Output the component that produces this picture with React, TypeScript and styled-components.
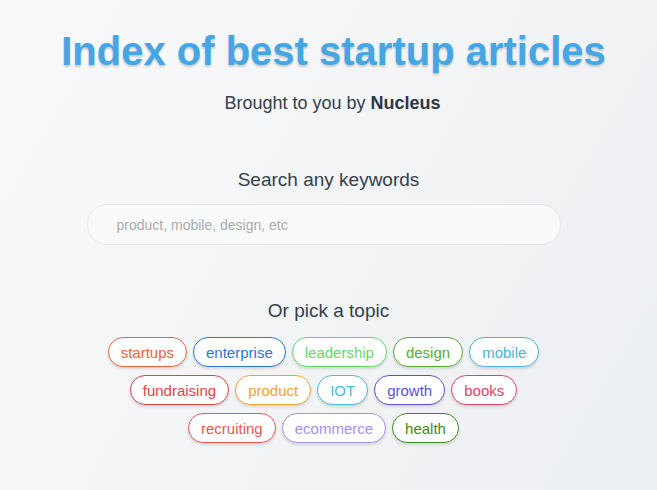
import React from "react";
import styled, { createGlobalStyle } from "styled-components";

const Global = createGlobalStyle`
  html, body { margin: 0; padding: 0; }
  body {
    font-family: "Liberation Sans", Arial, sans-serif;
    background: linear-gradient(120deg, #f9fafb 0%, #f1f3f5 60%, #eceff2 100%);
    min-height: 490px;
  }
`;

const Page = styled.main`
  display: flex;
  flex-direction: column;
  align-items: center;
  min-height: 490px;
  padding-top: 27px;
  box-sizing: border-box;
`;

const Title = styled.h1`
  margin: 0 0 0 10px;
  font-family: "Liberation Sans", Arial, sans-serif;
  font-weight: 700;
  font-size: 40px;
  line-height: 48px;
  color: #46a6e4;
  text-shadow: 0 2px 2px rgba(0, 0, 0, 0.18);
`;

const Byline = styled.p`
  margin: 17px 0 0 8px;
  font-size: 18px;
  line-height: 22px;
  color: #34404c;
  b { font-weight: 700; color: #2c3742; }
`;

const Label = styled.h2<{ $top: number }>`
  margin: ${(p) => p.$top}px 0 0;
  font-weight: 400;
  font-size: 19px;
  line-height: 24px;
  color: #34404c;
`;

const Search = styled.input`
  margin: 12px 10px 0 0;
  width: 474px;
  height: 41px;
  box-sizing: border-box;
  border-radius: 21px;
  border: 1px solid #e2e6ea;
  background: #f9fafa;
  padding: 0 0 0 29px;
  font-family: "Liberation Sans", Arial, sans-serif;
  font-size: 14px;
  color: #555;
  outline: none;
  &::placeholder { color: #a9abad; }
`;

const Tags = styled.div`
  margin: 14px 10px 0 0;
  display: flex;
  flex-direction: column;
  align-items: center;
  gap: 8px;
`;

const TagRow = styled.div`
  display: flex;
  gap: 6px;
`;

const Tag = styled.button<{ $c: string }>`
  height: 30px;
  box-sizing: border-box;
  padding: 0 12px;
  border-radius: 15px;
  border: 1px solid ${(p) => p.$c};
  color: ${(p) => p.$c};
  background: #fff;
  font-family: "Liberation Sans", Arial, sans-serif;
  font-size: 15px;
  box-shadow: 0 2px 3px rgba(0, 0, 0, 0.12);
  cursor: pointer;
`;

const rows: [string, string][][] = [
  [
    ["startups", "#e8643a"],
    ["enterprise", "#2a78d4"],
    ["leadership", "#62d86c"],
    ["design", "#58ab38"],
    ["mobile", "#4cb4dc"],
  ],
  [
    ["fundraising", "#e04444"],
    ["product", "#f2a232"],
    ["IOT", "#4cb8e6"],
    ["growth", "#5a50d6"],
    ["books", "#e0426c"],
  ],
  [
    ["recruiting", "#e85656"],
    ["ecommerce", "#a890ea"],
    ["health", "#3e8a22"],
  ],
];

export default function App() {
  return (
    <>
      <Global />
      <Page>
        <Title>Index of best startup articles</Title>
        <Byline>
          Brought to you by <b>Nucleus</b>
        </Byline>
        <Label $top={54}>Search any keywords</Label>
        <Search placeholder="product, mobile, design, etc" />
        <Label $top={54}>Or pick a topic</Label>
        <Tags>
          {rows.map((r, i) => (
            <TagRow key={i}>
              {r.map(([t, c]) => (
                <Tag key={t} $c={c}>
                  {t}
                </Tag>
              ))}
            </TagRow>
          ))}
        </Tags>
      </Page>
    </>
  );
}
